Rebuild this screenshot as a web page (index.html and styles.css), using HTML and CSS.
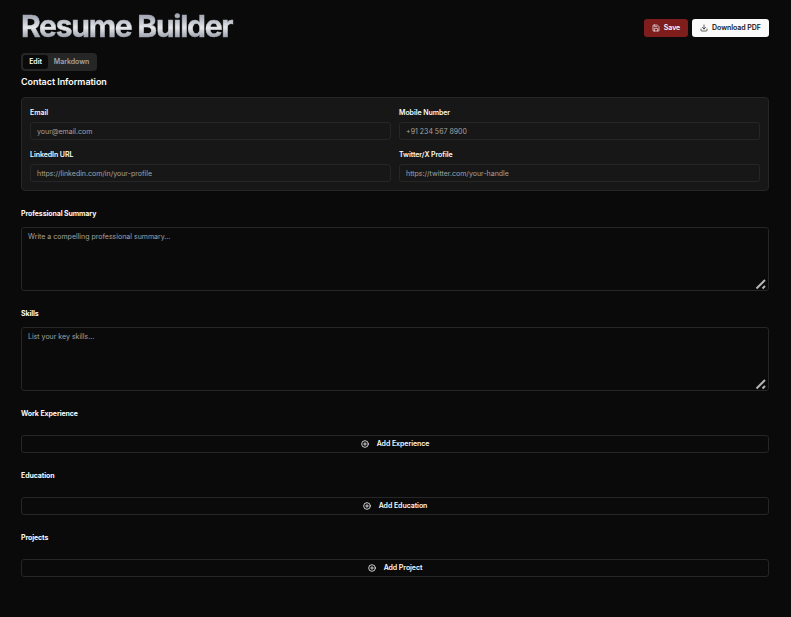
FILE: index.html
```html
<!DOCTYPE html>
<html lang="en">
<head>
<meta charset="utf-8">
<title>Resume Builder</title>
<link rel="stylesheet" href="styles.css">
</head>
<body>
<main class="page">
  <header class="header">
    <h1 class="title">Resume Builder</h1>
    <div class="actions">
      <button class="btn btn-save"><svg class="icon" viewBox="0 0 24 24"><path d="M15.2 3a2 2 0 0 1 1.4.6l3.800 3.800a2 2 0 0 1 .6 1.400V19a2 2 0 0 1-2 2H5a2 2 0 0 1-2-2V5a2 2 0 0 1 2-2z"/><path d="M17 21v-7a1 1 0 0 0-1-1H8a1 1 0 0 0-1 1v7M7 3v4a1 1 0 0 0 1 1h7"/></svg>Save</button>
      <button class="btn btn-download"><svg class="icon" viewBox="0 0 24 24"><path d="M21 15v4a2 2 0 0 1-2 2H5a2 2 0 0 1-2-2v-4M7 10l5 5 5-5M12 15V3"/></svg>Download PDF</button>
    </div>
  </header>
  <div class="tabs">
    <button class="tab tab-active">Edit</button>
    <button class="tab">Markdown</button>
  </div>
  <h2 class="heading">Contact Information</h2>
  <section class="card">
    <label class="field"><span class="label">Email</span><input class="input" placeholder="your@email.com"></label>
    <label class="field"><span class="label">Mobile Number</span><input class="input" placeholder="+91 234 567 8900"></label>
    <label class="field"><span class="label">LinkedIn URL</span><input class="input" placeholder="https://linkedin.com/in/your-profile"></label>
    <label class="field"><span class="label">Twitter/X Profile</span><input class="input" placeholder="https://twitter.com/your-handle"></label>
  </section>
  <section class="section">
    <h3 class="section-title">Professional Summary</h3>
    <div class="area">
      <textarea class="textarea" placeholder="Write a compelling professional summary..."></textarea>
      <svg class="grip" viewBox="0 0 12 12"><path d="M1.500 10.500l8.500-8.500M7.500 10.500l2.500-2.500"/></svg>
    </div>
  </section>
  <section class="section">
    <h3 class="section-title">Skills</h3>
    <div class="area">
      <textarea class="textarea" placeholder="List your key skills..."></textarea>
      <svg class="grip" viewBox="0 0 12 12"><path d="M1.500 10.500l8.500-8.500M7.500 10.500l2.500-2.500"/></svg>
    </div>
  </section>
  <section class="section section-add">
    <h3 class="section-title">Work Experience</h3>
    <button class="add"><svg class="icon add-icon" viewBox="0 0 24 24"><circle cx="12" cy="12" r="10"/><path d="M8 12h8M12 8v8"/></svg>Add Experience</button>
  </section>
  <section class="section section-add">
    <h3 class="section-title">Education</h3>
    <button class="add"><svg class="icon add-icon" viewBox="0 0 24 24"><circle cx="12" cy="12" r="10"/><path d="M8 12h8M12 8v8"/></svg>Add Education</button>
  </section>
  <section class="section section-add">
    <h3 class="section-title">Projects</h3>
    <button class="add"><svg class="icon add-icon" viewBox="0 0 24 24"><circle cx="12" cy="12" r="10"/><path d="M8 12h8M12 8v8"/></svg>Add Project</button>
  </section>
</main>
</body>
</html>
```
FILE: styles.css
```css
* { box-sizing: border-box; margin: 0; }
html, body { background: #0a0a0a; }
body {
  min-height: 617px;
  color: #fafafa;
  font-family: Inter, "Liberation Sans", sans-serif;
  font-size: 7px;
  line-height: 10px;
}
button, input, textarea { font: inherit; color: inherit; }
.page { width: 748px; margin-left: 21px; padding-top: 10px; }
.header { display: flex; justify-content: space-between; align-items: center; height: 35px; }
.title {
  font-size: 30px;
  line-height: 36px;
  font-weight: 700;
  letter-spacing: -1.25px;
  padding-right: 4px;
  margin-top: -3px;
  color: transparent;
  background: linear-gradient(to bottom, #9ca3af 12%, #a9aeb9 25%, #e5e7eb 55%, #d0d3da 62%, #8b919d 88%);
  -webkit-background-clip: text;
  background-clip: text;
  -webkit-text-stroke: 0.5px transparent;
}
.actions { display: flex; gap: 4px; }
.btn {
  display: flex;
  align-items: center;
  justify-content: center;
  gap: 4px;
  height: 18px;
  padding: 0;
  border: 0;
  border-radius: 3px;
  font-weight: 600;
  letter-spacing: -0.05px;
}
.btn-save { width: 44px; background: #7f1d1d; }
.btn-download { width: 77px; background: #fafafa; color: #171717; }
.icon { width: 8px; height: 8px; fill: none; stroke: currentColor; stroke-width: 2; stroke-linecap: round; stroke-linejoin: round; }
.tabs { display: flex; width: 76px; height: 18px; margin-top: 8px; padding: 2px; border-radius: 4px; background: #262626; }
.tab { flex: 1; padding: 0; border: 0; border-radius: 3px; background: none; color: #a3a3a3; font-weight: 600; letter-spacing: -0.06px; line-height: 10px; }
.tab-active { flex: 0 0 25px; background: #0a0a0a; color: #fafafa; }
.heading { margin-top: 4px; font-size: 9px; line-height: 14px; font-weight: 600; letter-spacing: -0.06px; }
.card {
  display: grid;
  grid-template-columns: 1fr 1fr;
  gap: 8px;
  height: 94px;
  margin-top: 8px;
  padding: 8px;
  border: 1px solid #262626;
  border-radius: 4px;
  background: #171717;
}
.field { display: flex; flex-direction: column; height: 34px; }
.label { height: 16px; line-height: 14px; font-weight: 600; letter-spacing: -0.06px; }
.input { width: 100%; height: 18px; padding: 0 6px; border: 1px solid #262626; border-radius: 3px; background: transparent; outline: 0; }
.input::placeholder, .textarea::placeholder { color: #a3a3a3; opacity: 1; }
.section { height: 100px; padding-top: 17px; }
.section-add { height: 62px; }
.section-title { height: 19px; font-size: 7px; line-height: 12px; font-weight: 700; letter-spacing: -0.1px; }
.area { position: relative; height: 64px; }
.textarea { display: block; width: 100%; height: 64px; padding: 4px 6px; border: 1px solid #262626; border-radius: 3px; background: transparent; outline: 0; resize: none; }
.grip { position: absolute; right: 2px; bottom: 1px; width: 12px; height: 12px; fill: none; stroke: #b5b5b5; stroke-width: 2; }
.add { display: flex; align-items: center; justify-content: center; gap: 8px; width: 100%; height: 18px; margin-top: 8px; padding: 0; border: 1px solid #262626; border-radius: 3px; background: transparent; font-weight: 600; letter-spacing: -0.06px; }
.add-icon { stroke-width: 2.4; }
```
